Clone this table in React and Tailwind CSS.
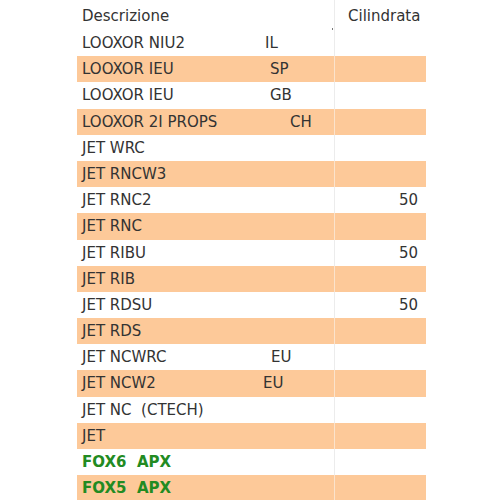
const rows = [
  { name: 'LOOXOR NIU2', code: 'IL', codeCls: 'left-[188px]' },
  { name: 'LOOXOR IEU', code: 'SP', codeCls: 'left-[193px]' },
  { name: 'LOOXOR IEU', code: 'GB', codeCls: 'left-[193px]' },
  { name: 'LOOXOR 2I PROPS', code: 'CH', codeCls: 'left-[213px]' },
  { name: 'JET WRC' },
  { name: 'JET RNCW3' },
  { name: 'JET RNC2', cc: '50' },
  { name: 'JET RNC' },
  { name: 'JET RIBU', cc: '50' },
  { name: 'JET RIB' },
  { name: 'JET RDSU', cc: '50' },
  { name: 'JET RDS' },
  { name: 'JET NCWRC', code: 'EU', codeCls: 'left-[194px]' },
  { name: 'JET NCW2', code: 'EU', codeCls: 'left-[186px]' },
  { name: 'JET NC\u00a0 (CTECH)' },
  { name: 'JET' },
  { name: 'FOX6\u00a0 APX', green: true },
  { name: 'FOX5\u00a0 APX', green: true },
];

export default function App() {
  return (
    <div className="w-[500px] h-[500px] bg-white overflow-hidden font-['DejaVu_Sans',sans-serif] text-[15px] text-[#333]">
      <div className="ml-[77px] w-[349px]">
        {/* header */}
        <div className="relative flex h-[30px]">
          <div className="w-[257px] pl-[5px] pt-[5px]">Descrizione</div>
          <div className="flex-1 border-l border-[#ececec] pl-[13px] pt-[5px]">Cilindrata</div>
          <span className="absolute left-[255px] top-[28px] w-[1px] h-[2px] bg-[#777]" />
        </div>

        {rows.map((r, i) => {
          const odd = i % 2 === 1;
          return (
            <div key={i} className="flex h-[26.2px] leading-[26px]">
              <div className={`relative w-[257px] pl-[5px] ${odd ? 'bg-[#fdc999]' : ''} ${r.green ? 'font-bold text-[#228b22]' : ''}`}>
                {r.name}
                {r.code && <span className={`absolute top-0 ${r.codeCls}`}>{r.code}</span>}
              </div>
              <div className={`flex-1 border-l text-right pr-[8px] ${odd ? 'bg-[#fdc999] border-[#fbe3cc]' : 'border-[#ececec]'}`}>
                {r.cc}
              </div>
            </div>
          );
        })}
      </div>
    </div>
  );
}
